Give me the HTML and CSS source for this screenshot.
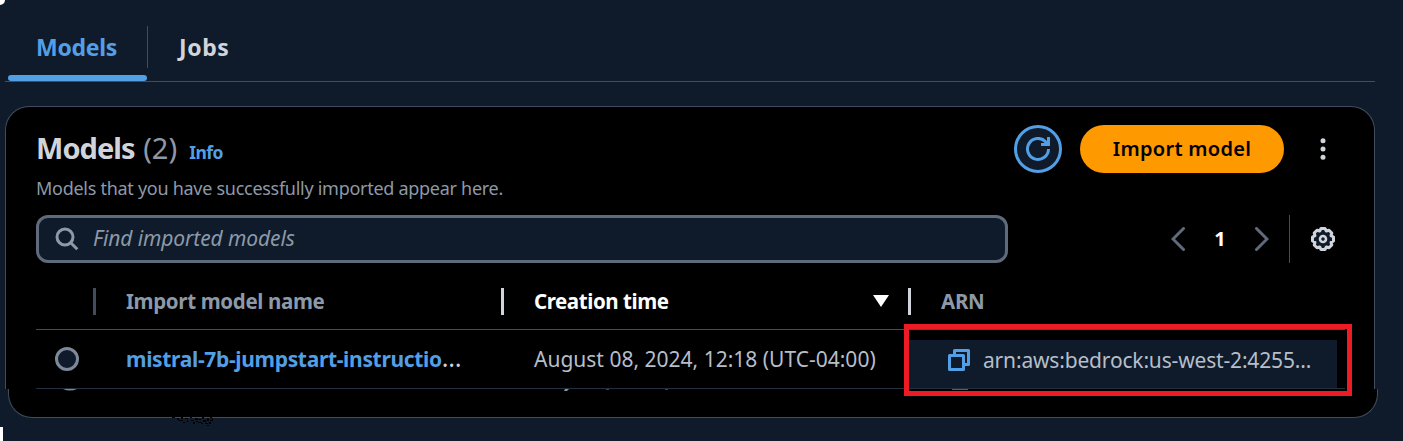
FILE: index.html
```
<!DOCTYPE html>
<html lang="en">
<head>
<meta charset="utf-8">
<title>Imported models</title>
<link rel="stylesheet" href="styles.css">
</head>
<body>
<main class="page">
  <nav class="tabs">
    <a class="tab active"><span class="t-tab1">Models</span></a>
    <a class="tab"><span class="t-tab2">Jobs</span></a>
  </nav>
  <section class="card">
    <header class="card-header">
      <div class="heading">
        <h1><span class="t-title">Models</span><span class="count">(2)</span><a class="info">Info</a></h1>
        <p class="description">Models that you have successfully imported appear here.</p>
      </div>
      <div class="actions">
        <button class="refresh" aria-label="Refresh">
          <svg width="24" height="24" viewBox="0 0 24 24" fill="none" stroke="currentColor" stroke-width="3"><path d="M22.500 12A10.500 10.500 0 1 1 19.500 4.600L22 7"/><path d="M22.500 0v7.500H15"/></svg>
        </button>
        <button class="import"><span>Import model</span></button>
        <svg class="dots" width="6" height="22" viewBox="0 0 6 22" fill="currentColor"><circle cx="3" cy="2.700" r="2.500"/><circle cx="3" cy="11" r="2.500"/><circle cx="3" cy="19.300" r="2.500"/></svg>
      </div>
    </header>
    <div class="tools">
      <div class="search">
        <svg width="24" height="24" viewBox="0 0 24 24" fill="none" stroke="currentColor" stroke-width="3"><circle cx="10" cy="10" r="8"/><path d="M15.700 15.700l6.600 6.600"/></svg>
        <span>Find imported models</span>
      </div>
      <div class="pager">
        <svg width="14" height="24" viewBox="0 0 14 24" fill="none" stroke="currentColor" stroke-width="3" stroke-linecap="round"><path d="M12.500 1.500L2 12l10.500 10.500"/></svg>
        <b>1</b>
        <svg width="14" height="24" viewBox="0 0 14 24" fill="none" stroke="currentColor" stroke-width="3" stroke-linecap="round"><path d="M1.500 1.500L12 12 1.500 22.500"/></svg>
      </div>
      <div class="settings">
        <svg width="26" height="26" viewBox="-13 -13 26 26" fill="none" stroke="currentColor" stroke-width="3" stroke-linejoin="round"><path fill="#0f1b2a" d="M-2-10.500H2L3.300-8 6-8.800 8.800-6 8-3.300 10.500-2V2L8 3.300 8.800 6 6 8.800 3.300 8 2 10.500H-2L-3.300 8-6 8.800-8.800 6-8 3.300-10.500 2V-2L-8-3.300-8.800-6-6-8.800-3.300-8Z"/><circle r="3" stroke-width="2.600"/></svg>
      </div>
    </div>
    <div class="row head">
      <div class="cell"></div>
      <div class="cell name"><span class="t-name">Import model name</span></div>
      <div class="cell time"><span class="t-time">Creation time</span><i class="sort"></i></div>
      <div class="cell arn"><span class="t-arn">ARN</span></div>
    </div>
    <div class="row body">
      <div class="cell pick"><i class="radio"></i></div>
      <div class="cell name"><a class="t-model">mistral-7b-jumpstart-instructio<span class="dotdot">…</span></a></div>
      <div class="cell time"><span class="t-date">August 08, 2024, 12:18 (UTC-04:00)</span></div>
      <div class="cell arn">
        <div class="arn-fill">
          <svg width="22" height="22" viewBox="0 0 22 22" fill="none" stroke="currentColor" stroke-width="3" stroke-linejoin="round"><path d="M6.500 5V1.500h14v14H17"/><path d="M1.500 6.500h14v14h-14z"/></svg>
          <span class="t-id">arn:aws:bedrock:us-west-2:4255…</span>
        </div>
      </div>
    </div>
  </section>
  <section class="card-end">
    <svg width="1280" height="4" viewBox="0 0 1280 4"><path fill="#7d8998" d="M54 0h14q-7 3-14 0z"/><path fill="#8c94a0" d="M556 0h4l-2 2h-3z"/><path fill="#39465a" d="M597 0h3v1h-3zM656 0h3v1h-3z"/><path fill="#39628f" d="M943 0h16v1h-16z"/></svg>
  </section>
  <svg class="speckle" width="44" height="10" viewBox="0 0 44 10" fill="#000" shape-rendering="crispEdges"><path d="M1 0h3v1H1zM6 1h2v2H6zM8 3h4v1H8zM10 0h2v2h-2zM14 1h3v1h-3zM12 5h2v1h-2zM16 3h1v2h-1zM19 0h2v1h-2zM20 3h3v1h-3zM22 5h2v2h-2zM24 1h3v2h-3zM25 4h2v1h-2zM27 5h4v1h-4zM28 2h2v1h-2zM31 0h2v2h-2zM32 3h3v2h-3zM30 6h2v1h-2zM34 6h3v1h-3zM36 1h2v3h-2zM39 0h2v1h-2zM39 3h3v1h-3zM38 5h2v2h-2zM41 1h1v2h-1zM36 8h2v1h-2z"/></svg>
  <div class="highlight"></div>
  <i class="nick top"></i><i class="nick bottom"></i>
</main>
</body>
</html>
```
FILE: styles.css
```
* { box-sizing: border-box; }
body { margin: 0; background: #0f1b2a; font-family: "Noto Sans", "Open Sans", sans-serif; color: #b6bec9; }
.page { position: relative; width: 1403px; height: 441px; overflow: hidden; padding-left: 5px; }
span, a, b, p, h1 { white-space: nowrap; }
svg { display: block; flex: none; }
.tabs { display: flex; width: 1370px; height: 82px; padding: 26px 0 0 3px; border-bottom: 1px solid #414d5c; }
.tab { display: flex; align-items: center; height: 42px; padding: 0 31px 1px 28px; color: #d1d5db; font-weight: 700; font-size: 23px; }
.tab.active { position: relative; width: 140px; border-right: 1px solid #414d5c; color: #539fe5; }
.tab.active::after { content: ""; position: absolute; left: 0; top: 49px; width: 139px; height: 6px; border-radius: 3px; background: #539fe5; }
.t-tab1 { letter-spacing: -0.3px; }
.t-tab2 { margin-left: 3px; letter-spacing: 0.6px; }
.card { width: 1370px; height: 283px; margin-top: 24px; padding: 0 30px; background: #000; border: 1px solid #414d5c; border-bottom: 0; border-radius: 24px 24px 0 0; }
.card-header { display: flex; justify-content: space-between; height: 108px; padding-top: 18px; }
h1 { display: flex; align-items: baseline; margin: 0; height: 48px; line-height: 46px; font-size: 29px; color: #d1d5db; }
.t-title { letter-spacing: -0.95px; }
.count { margin-left: 8.5px; font-weight: 400; color: #8d99a8; }
.info { margin-left: 12px; font-size: 17.5px; letter-spacing: -0.5px; color: #539fe5; }
.description { margin: 3px 0 0; font-size: 18px; line-height: 24px; letter-spacing: -0.28px; color: #8d99a8; }
.actions { display: flex; height: 48px; align-items: center; margin-right: 18px; }
button { padding: 0; font: inherit; }
.refresh { display: grid; place-items: center; width: 48px; height: 48px; border: 3px solid #539fe5; border-radius: 50%; background: #0f1b2a; color: #539fe5; }
.import { width: 204px; height: 48px; margin-left: 18px; padding-bottom: 2px; border: 0; border-radius: 24px; background: #ff9900; color: #000; font-size: 20px; font-weight: 600; letter-spacing: 0.3px; }
.dots { margin-left: 36px; color: #d1d5db; }
.tools { display: flex; width: 1322px; height: 48px; }
.search { display: flex; flex: none; align-items: center; width: 972px; padding-left: 16px; gap: 14px; border: 3px solid #5f6b7a; border-radius: 12px; background: #0f1b2a; color: #8d99a8; font-size: 21px; font-style: italic; letter-spacing: -0.1px; }
.search span { padding-bottom: 2px; }
.pager { display: flex; flex: none; align-items: center; justify-content: space-between; width: 98px; margin-left: 163px; color: #5f6b7a; }
.pager b { padding-bottom: 2px; color: #fff; font-size: 20px; }
.settings { display: grid; flex: none; place-items: center; width: 67px; margin-left: 20px; border-left: 1px solid #414d5c; color: #d1d5db; }
.row { display: grid; grid-template-columns: 57px 408px 407px 437px; width: 1309px; }
.cell { display: flex; align-items: center; min-width: 0; }
.head { height: 67px; padding-top: 9px; border-bottom: 1px solid #414d5c; font-size: 20.5px; font-weight: 700; color: #8d99a8; }
.head .cell { height: 58px; }
.head .cell span { padding-bottom: 1px; }
.head .cell + .cell::before { content: ""; width: 3px; height: 27px; background: #d1d5db; margin-right: 30px; }
.head .name.cell::before { background: #414d5c; }
.head .time { color: #fff; }
.t-name { letter-spacing: -0.35px; }
.t-time { letter-spacing: -0.43px; }
.t-arn { letter-spacing: -0.3px; }
.sort { margin-left: auto; margin-right: 19px; border: 8px solid transparent; border-top: 12px solid #fff; border-bottom: 0; }
.body { height: 59px; border-bottom: 1px solid #232f3e; font-size: 21px; }
.pick { padding-left: 19px; }
.radio { width: 24px; height: 24px; border: 3px solid #7d8998; border-radius: 50%; background: #0f1b2a; }
.body .name, .body .time { padding-left: 33px; }
.t-model { font-weight: 700; letter-spacing: -0.33px; color: #539fe5; }
.dotdot { color: #d1d5db; font-size: 25px; line-height: 1; font-weight: 400; }
.arn-fill { display: flex; align-items: center; width: 429px; height: 48px; margin-top: 10px; padding: 0 0 9px 40px; gap: 13px; background: #0f1b2a; }
.arn-fill svg { color: #539fe5; }
.t-id { letter-spacing: -0.17px; }
.card-end { width: 1370px; height: 29px; margin-left: 3px; background: #000; border: 1px solid #414d5c; border-top: 0; border-radius: 0 0 24px 24px; }
.speckle { position: absolute; left: 171px; top: 417px; }
.highlight { position: absolute; left: 904px; top: 324px; width: 448px; height: 72px; border: 5px solid #ed1c24; }
.nick { position: absolute; left: 0; background: #fff; }
.nick.top { top: 0; width: 5px; height: 5px; border-bottom-right-radius: 5px; }
.nick.bottom { top: 427px; width: 3px; height: 14px; }
```
